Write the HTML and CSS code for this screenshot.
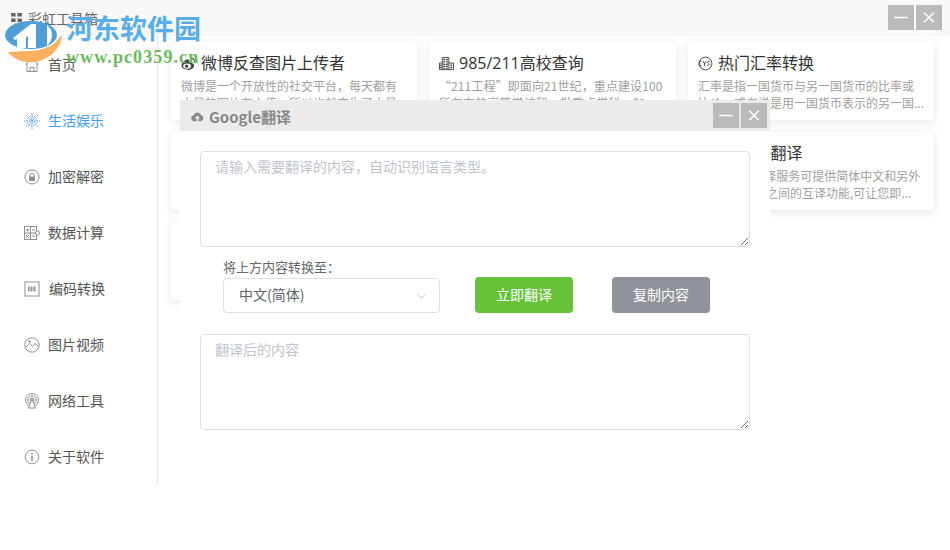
FILE: index.html
```html
<!DOCTYPE html>
<html lang="zh-CN">
<head>
<meta charset="utf-8">
<title>彩虹工具箱</title>
<link rel="stylesheet" href="styles.css">
</head>
<body>
<header class="topbar">
  <div class="brand">
    <svg class="brand-icon" viewBox="0 0 12 10"><path fill="#666" d="M0 0h5v4H0zM7 0h5v4H7zM0 6h5v4H0zM7 6h5v4H7z"/></svg>
    <span>彩虹工具箱</span>
  </div>
  <div class="winctl">
    <button class="winbtn"><svg viewBox="0 0 26 26"><path d="M6 13h14" stroke="#fff" stroke-width="1.6"/></svg></button>
    <button class="winbtn"><svg viewBox="0 0 26 26"><path d="M8 8l10 10M18 8L8 18" stroke="#fff" stroke-width="1.6"/></svg></button>
  </div>
</header>
<div class="main">
  <nav class="sidebar">
    <a class="nav"><svg class="nav-icon" viewBox="0 0 16 16" fill="none" stroke="#8f8f96"><path d="M1.5 7.5L8 1.5l6.500 6M3 6.500v8h10v-8M6 14.500v-4h4v4"/></svg><span>首页</span></a>
    <a class="nav active"><svg class="nav-icon" viewBox="0 0 16 16" fill="none" stroke="#5aa9ee" stroke-dasharray="1.500 1"><circle cx="8" cy="8" r="2.500"/><circle cx="8" cy="8" r="5"/><path d="M8 0v16M0 8h16M2 2l12 12M14 2L2 14"/></svg><span>生活娱乐</span></a>
    <a class="nav"><svg class="nav-icon" viewBox="0 0 16 16" fill="none" stroke="#8f8f96"><circle cx="8" cy="8" r="7"/><path fill="#8f8f96" stroke="none" d="M5 7.500h6V12H5z"/><path d="M6 7.500V6a2 2 0 0 1 4 0v1.500"/></svg><span>加密解密</span></a>
    <a class="nav"><svg class="nav-icon" viewBox="0 0 16 16" fill="none" stroke="#8f8f96"><rect x="0.500" y="1.500" width="12" height="13"/><path d="M0.500 8h12M6.500 1.500v13M2 5h3M3.500 3.500v3M2 10l3 3M5 10l-3 3M8 5h3M8 11h3"/><circle cx="13.500" cy="8" r="2" fill="#fff"/></svg><span>数据计算</span></a>
    <a class="nav"><svg class="nav-icon" viewBox="0 0 16 16" fill="none" stroke="#8f8f96"><rect x="1" y="1" width="14" height="14"/><path stroke-width="5" stroke-dasharray="1 0.500" d="M4 8h8"/></svg><span class="nudge">编码转换</span></a>
    <a class="nav"><svg class="nav-icon" viewBox="0 0 16 16" fill="none" stroke="#8f8f96"><circle cx="8" cy="8" r="7.200"/><path d="M1.500 10.500l4-4 3 3 2.500-3 3.500 3"/><circle cx="5.500" cy="4.500" r="0.800" fill="#8f8f96"/></svg><span>图片视频</span></a>
    <a class="nav"><svg class="nav-icon" viewBox="0 0 16 16" fill="none" stroke="#8f8f96"><circle cx="8" cy="7" r="6.500"/><circle cx="8" cy="7" r="4.200"/><circle cx="8" cy="7" r="2"/><path fill="#fff" d="M8 6l-3.500 9h7z"/></svg><span>网络工具</span></a>
    <a class="nav"><svg class="nav-icon" viewBox="0 0 16 16" fill="none" stroke="#8f8f96"><circle cx="8" cy="8" r="6.800"/><path stroke-width="1.500" d="M8 7v5M8 4v1.500"/></svg><span>关于软件</span></a>
  </nav>
  <section class="cards">
    <article class="card">
      <h3><svg class="card-icon" viewBox="0 0 16 16"><path fill="#444" d="M7 14.500c-3.500 0-6.500-1.700-6.500-4.300C.5 7.500 4.500 3.500 7 3.500c1.500 0 1.800 1.200 1.500 2.500 2-.8 3.700-.5 3.700 1 0 .4 0 .7-.2 1 1.200.3 2 1 2 2.200 0 2.400-3.200 4.800-7 4.800z"/><ellipse cx="6.500" cy="10.700" rx="4.200" ry="2.800" fill="#fff"/><circle cx="6" cy="10.800" r="1.700" fill="#444"/><path d="M10.500 2.500a3.500 3.500 0 0 1 4 4" fill="none" stroke="#444" stroke-width="1.200"/></svg>微博反查图片上传者</h3>
      <p>微博是一个开放性的社交平台，每天都有大量的图片在上传，所以也就产生了大量...</p>
    </article>
    <article class="card">
      <h3><svg class="card-icon" viewBox="0 0 16 16" fill="none" stroke="#444"><path d="M3.500 14.500V1.500h7v13M.5 14.500v-7h3M10.500 7.500h5v7M.5 14.500h15"/><path stroke-width="2" stroke-dasharray="1.500 1" d="M5.500 3v11M8.500 3v11M2 9v5M13 9v5"/></svg>985/211高校查询</h3>
      <p class="quoted">“211工程”即面向21世纪，重点建设100所左右的高等学校和一批重点学科，“9...</p>
    </article>
    <article class="card">
      <h3><svg class="card-icon" viewBox="0 0 16 16" fill="none" stroke="#444"><circle cx="8" cy="8" r="6.800"/><path d="M3.500 5.500a2.500 2.500 0 0 0 0 5M5.500 5.500l1.500 3 1.500-3M7 8.500v2.500M12.500 6c-2-1.500-3 .8-1.500 1.500s.8 3.200-1.500 2"/></svg>热门汇率转换</h3>
      <p>汇率是指一国货币与另一国货币的比率或比价，或者说是用一国货币表示的另一国...</p>
    </article>
    <article class="card"></article>
    <article class="card"></article>
    <article class="card">
      <h3><svg class="card-icon" viewBox="0 0 16 16"></svg>Google翻译</h3>
      <p>Google 的翻译服务可提供简体中文和另外100多种语言之间的互译功能,可让您即...</p>
    </article>
    <article class="card"></article>
  </section>
</div>

<div class="modal">
  <div class="modal-head">
    <div class="modal-title">
      <svg class="cloud" viewBox="0 0 14 11"><path fill="#888" d="M3.500 10.500a3 3 0 0 1-.5-6A4 4 0 0 1 10.700 4a3.300 3.300 0 0 1-.2 6.500H8V7.500h2L7 4.500l-3 3h2v3z"/></svg>
      <span>Google翻译</span>
    </div>
    <div class="winctl modal-ctl">
      <button class="winbtn"><svg viewBox="0 0 26 26"><path d="M6 13h14" stroke="#fff" stroke-width="1.600"/></svg></button>
      <button class="winbtn"><svg viewBox="0 0 26 26"><path d="M8 8l10 10M18 8L8 18" stroke="#fff" stroke-width="1.600"/></svg></button>
    </div>
  </div>
  <div class="modal-body">
    <textarea class="area" placeholder="请输入需要翻译的内容，自动识别语言类型。"></textarea>
    <div class="controls">
      <div class="pick">
        <label class="pick-label">将上方内容转换至：</label>
        <div class="select"><span>中文(简体)</span><svg class="chev" viewBox="0 0 12 7"><path d="M1 1l5 5 5-5" fill="none" stroke="#c0c4cc"/></svg></div>
      </div>
      <button class="btn btn-green">立即翻译</button>
      <button class="btn btn-gray">复制内容</button>
    </div>
    <textarea class="area" placeholder="翻译后的内容"></textarea>
  </div>
</div>

<div class="watermark">
  <svg class="wm-logo" viewBox="5 20 58 43">
    <path fill="#fbb160" d="M8 52C14 60 24 63 33 62C48 61 60 50 62 36C59 36 58 42 50 46C42 50 34 51 28 51C20 51 14 52 8 52Z"/>
    <ellipse cx="31" cy="35" rx="26" ry="14" fill="#4f9fd6"/>
    <path fill="#fff" d="M13 38L31 24H36V48H28V36L26 37.500V48H17V39L15 40Z"/>
    <path fill="#fff" d="M47 25Q52 29 52 35Q52 41 47 46Z"/>
  </svg>
  <div class="wm-text">
    <div class="wm-cn">河东软件园</div>
    <div class="wm-url">www.pc0359.cn</div>
  </div>
</div>
</body>
</html>
```
FILE: styles.css
```css
* { box-sizing: border-box; }
html, body { margin: 0; height: 100%; background: #fff; overflow: hidden; }
body { font-family: "Noto Sans CJK SC", "Noto Sans", sans-serif; color: #333; position: relative; }

.topbar { height: 36px; background: #f8f8f8; display: flex; justify-content: space-between; padding: 5px 8px 0 11px; }
.brand { display: flex; align-items: center; height: 25px; gap: 6px; font-size: 14px; color: #666; }
.brand-icon { width: 11px; height: 9px; }
.winctl { display: flex; gap: 2px; }
.winbtn { width: 26px; height: 25px; padding: 0; border: 0; background: #bbb; display: block; }
.winbtn svg { display: block; width: 26px; height: 25px; }

.main { display: flex; }
.sidebar { width: 158px; height: 448px; border-right: 1px solid #e6e6e6; flex: none; }
.nav { height: 56px; display: flex; align-items: center; padding-left: 24px; gap: 8px; font-size: 14px; color: #555; }
.nav.active { color: #409eff; }
.nav-icon { width: 16px; height: 16px; flex: none; margin-top: 2px; }
.nudge { margin-left: 1px; }

.cards { flex: 1; display: grid; grid-template-columns: 246px 247px 246px; grid-auto-rows: 78px; gap: 12px; padding: 6px 0 0 13px; align-content: start; }
.card { background: #fff; border-radius: 4px; box-shadow: 0 2px 10px rgba(60, 60, 90, .12); padding: 10px 10px 0; overflow: hidden; }
.card h3 { margin: 0; font-family: "Open Sans", "Noto Sans CJK SC", sans-serif; font-size: 16px; font-weight: 400; line-height: 22px; color: #333; display: flex; align-items: center; gap: 5px; white-space: nowrap; }
.card-icon { width: 15px; height: 15px; flex: none; }
.card p { margin: 3px 0 0; font-size: 12px; line-height: 17px; color: #a0a0a0; }
.card .quoted { letter-spacing: .1px; }

.modal { position: absolute; left: 180px; top: 100px; width: 590px; height: 350px; background: #fff; }
.modal-head { height: 31px; background: #ebebeb; display: flex; justify-content: space-between; padding: 3px 3px 0 11px; }
.modal-title { display: flex; align-items: center; height: 27px; gap: 5px; font-size: 15px; font-weight: 700; color: #888; }
.cloud { width: 13px; height: 11px; }
.modal-body { padding: 20px 20px 0; }
.area { display: block; width: 550px; height: 96px; border: 1px solid #dcdfe6; border-radius: 4px; padding: 3px 15px 5px 14px; font: 14px/22px "Noto Sans CJK SC", sans-serif; color: #606266; background: #fff; outline: 0; }
.area::placeholder { color: #c0c4cc; opacity: 1; }
.controls { display: flex; align-items: flex-end; height: 87px; padding: 0 0 21px 23px; }
.pick { width: 217px; margin-right: 35px; }
.pick-label { display: block; font-size: 13px; line-height: 16px; color: #666; margin-bottom: 2px; position: relative; top: -1px; }
.select { height: 35px; border: 1px solid #dcdfe6; border-radius: 4px; display: flex; align-items: center; justify-content: space-between; padding: 0 12px 0 15px; font-size: 14px; color: #606266; }
.select span { margin-top: -3px; }
.chev { width: 11px; height: 6px; }
.btn { width: 98px; height: 36px; border: 0; border-radius: 4px; color: #fff; font: 14px "Noto Sans CJK SC", sans-serif; padding: 0 0 2px; }
.btn-green { background: #67c23a; margin-right: 39px; }
.btn-gray { background: #909399; }

.watermark { position: absolute; left: 5px; top: 14px; display: flex; gap: 3px; pointer-events: none; }
.wm-logo { width: 58px; height: 43px; margin-top: 6px; flex: none; }
.wm-text { margin-top: -2px; }
.wm-cn { font: 700 27px/32px "Noto Sans CJK SC", sans-serif; color: #5aaee8; }
.wm-url { font: 700 18px/20px "Liberation Serif", serif; color: #6dbb5e; margin-top: 3px; letter-spacing: 1.100px; white-space: nowrap; }
```
